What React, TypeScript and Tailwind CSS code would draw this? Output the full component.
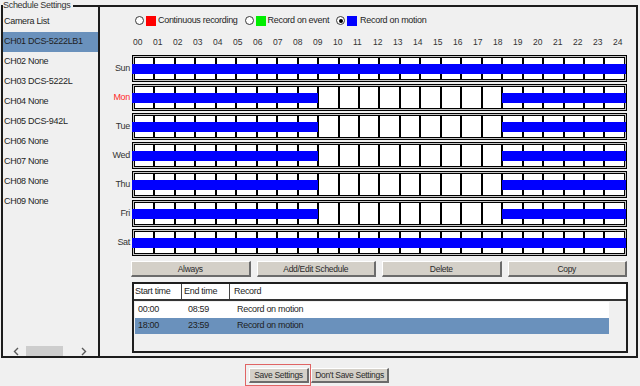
import React from 'react';
import clsx from 'clsx';

const HOUR_LABELS = Array.from({ length: 25 }, (_, i) => String(i).padStart(2, '0'));

const allDay = () => true;
const offHours = (h: number) => h < 9 || h >= 18;

const DAYS = [
  { name: 'Sun', on: allDay },
  { name: 'Mon', on: offHours, red: true },
  { name: 'Tue', on: offHours },
  { name: 'Wed', on: offHours },
  { name: 'Thu', on: offHours },
  { name: 'Fri', on: offHours },
  { name: 'Sat', on: allDay },
];

const CAMERAS = [
  'CH01 DCS-5222LB1',
  'CH02 None',
  'CH03 DCS-5222L',
  'CH04 None',
  'CH05 DCS-942L',
  'CH06 None',
  'CH07 None',
  'CH08 None',
  'CH09 None',
];

const SCHEDULES = [
  { start: '00:00', end: '08:59', record: 'Record on motion' },
  { start: '18:00', end: '23:59', record: 'Record on motion', selected: true },
];

const btn =
  'h-full bg-[#d4d0c8] border-t border-l border-t-white border-l-white border-r-2 border-b-2 border-r-[#6b6b6b] border-b-[#6b6b6b] text-[8.5px] leading-[12px] text-[#2a2a2a] text-center';

function Radio({ checked }: { checked?: boolean }) {
  return (
    <span className="w-[9px] h-[9px] rounded-full border border-[#3a3a3a] bg-white flex items-center justify-center">
      {checked && <span className="w-[4px] h-[4px] rounded-full bg-black" />}
    </span>
  );
}

function Chevron({ dir }: { dir: 'left' | 'right' }) {
  return (
    <svg width="6" height="9" viewBox="0 0 6 9">
      <polyline
        points={dir === 'left' ? '5,1 1.5,4.5 5,8' : '1,1 4.5,4.5 1,8'}
        fill="none"
        stroke="#5a5a5a"
        strokeWidth="1.4"
      />
    </svg>
  );
}

function DayRow({ day }: { day: (typeof DAYS)[number] }) {
  return (
    <div className="flex items-center h-[27px]">
      <div
        className={clsx(
          'w-[32px] pr-[2px] text-right text-[9px]',
          day.red ? 'text-[#ff2b2b]' : 'text-[#333]'
        )}
      >
        {day.name}
      </div>
      <div className="w-[495px] h-full border border-black bg-[#c4c4c4] p-px">
        <div className="flex h-full bg-black p-px gap-[2px]">
          {Array.from({ length: 24 }, (_, h) => (
            <div key={h} className="flex-1 bg-white flex flex-col justify-center">
              {day.on(h) && (
                <div
                  className={clsx(
                    'h-[10px] bg-[#0000ff]',
                    h === 0 ? '-ml-[3px]' : '-ml-px',
                    h === 23 ? '-mr-[2px]' : '-mr-px'
                  )}
                />
              )}
            </div>
          ))}
        </div>
      </div>
    </div>
  );
}

export default function App() {
  return (
    <div className="w-[640px] h-[386px] bg-[#f0f0f0] overflow-hidden text-[#1e1e1e] font-['Liberation_Sans',Arial,sans-serif] tracking-[-0.3px]">
      {/* Schedule Settings group */}
      <div className="relative ml-px mt-[5px] w-[637px] h-[353px] border-2 border-[#1c1c1c] flex">
        <span className="absolute -top-[8px] left-0 pr-[3px] bg-[#f0f0f0] text-[9px] leading-[12px] text-[#333]">
          Schedule Settings
        </span>

        {/* Camera list */}
        <div className="w-[97px] border-r-2 border-[#1c1c1c] flex flex-col pt-[5px]">
          <div className="h-[20px] flex items-center pl-px text-[9px]">Camera List</div>
          {CAMERAS.map((c, i) => (
            <div
              key={c}
              className={clsx(
                'h-[20px] flex items-center pl-px text-[9px]',
                i === 0 && 'bg-[#6a91bc]'
              )}
            >
              {c}
            </div>
          ))}
          <div className="mt-auto h-[10px] flex items-center pl-[10px]">
            <Chevron dir="left" />
            <div className="ml-[7px] w-[37px] h-[10px] bg-[#cdcdcd]" />
            <div className="ml-[18px]">
              <Chevron dir="right" />
            </div>
          </div>
        </div>

        {/* Schedule area */}
        <div className="flex-1 flex flex-col">
          <div className="mt-[8px] h-[11px] pl-[35px] flex items-center text-[9px]">
            <Radio />
            <span className="ml-[2px] w-[10px] h-[10px] bg-[#ff0000]" />
            <span className="ml-[2px]">Continuous recording</span>
            <span className="ml-[7px]">
              <Radio />
            </span>
            <span className="ml-[2px] w-[10px] h-[10px] bg-[#00ee00]" />
            <span className="ml-[2px]">Record on event</span>
            <span className="ml-[7px]">
              <Radio checked />
            </span>
            <span className="ml-[2px] w-[10px] h-[10px] bg-[#0000ff]" />
            <span className="ml-[3px]">Record on motion</span>
          </div>

          <div className="mt-[11px] h-[11px] pl-[33px] flex text-[8.5px] leading-[11px] text-[#333] tracking-normal">
            {HOUR_LABELS.map((l) => (
              <span key={l} className="w-[20px] shrink-0">
                {l}
              </span>
            ))}
          </div>

          <div className="mt-[7px] flex flex-col gap-[2px]">
            {DAYS.map((d) => (
              <DayRow key={d.name} day={d} />
            ))}
          </div>

          <div className="mt-[5px] ml-[31px] w-[496px] h-[16px] grid grid-cols-4 gap-[6px]">
            <button className={btn}>Always</button>
            <button className={btn}>Add/Edit Schedule</button>
            <button className={btn}>Delete</button>
            <button className={btn}>Copy</button>
          </div>

          {/* Schedule table */}
          <div className="mt-[5px] ml-[32px] w-[496px] h-[71px] border-2 border-[#1e1e1e] bg-[#f0f0f0] flex flex-col text-[9px]">
            <div className="h-[17px] flex bg-white border-b-2 border-[#333]">
              <div className="w-[48px] pl-px flex items-center border-r border-[#444]">Start time</div>
              <div className="w-[48px] pl-[2px] flex items-center border-r border-[#444]">End time</div>
              <div className="flex-1 pl-[4px] flex items-center">Record</div>
            </div>
            <div className="pt-px">
              {SCHEDULES.map((s) => (
                <div
                  key={s.start}
                  className={clsx(
                    'ml-px w-[474px] h-[16px] flex items-center',
                    s.selected ? 'bg-[#6a91bc]' : 'bg-white'
                  )}
                >
                  <span className="w-[50px] pl-[3px]">{s.start}</span>
                  <span className="w-[49px] pl-[3px]">{s.end}</span>
                  <span className="pl-[3px]">{s.record}</span>
                </div>
              ))}
            </div>
          </div>
        </div>
      </div>

      {/* Save buttons */}
      <div className="mt-[6px] ml-[245px] flex items-start">
        <div className="border border-[#e06464] pl-[3px] pt-[3px] pr-px pb-[2px]">
          <button className={clsx(btn, 'w-[60px] h-[14px] block')}>Save Settings</button>
        </div>
        <button className={clsx(btn, 'mt-[4px] w-[78px] h-[14px]')}>Don't Save Settings</button>
      </div>
    </div>
  );
}
